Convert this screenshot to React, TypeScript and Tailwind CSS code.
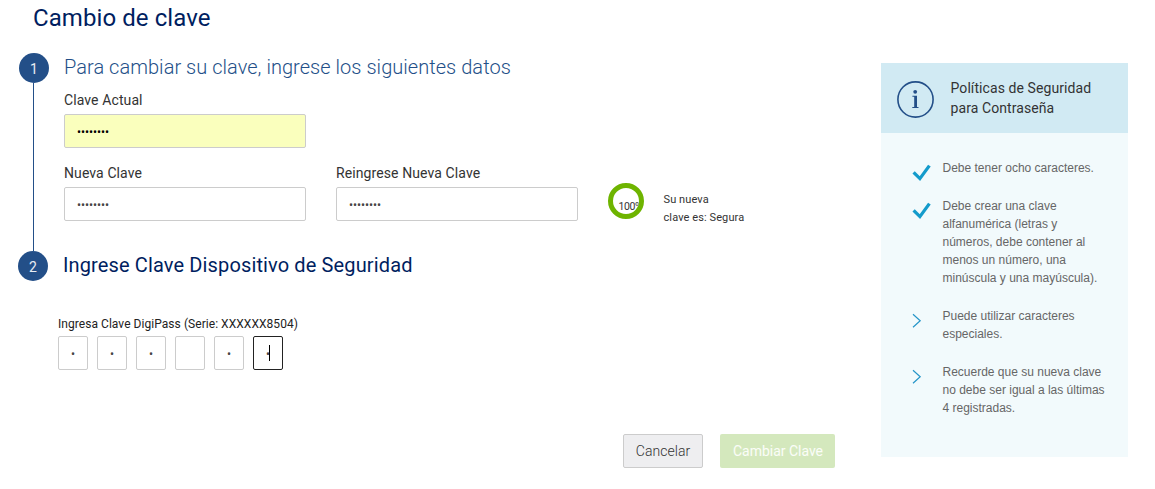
import React from "react";

const label = "h-5 text-[14px] leading-5 tracking-[0.1px] whitespace-nowrap text-[#333]";
const field =
  "block h-[34px] w-[242px] rounded-[2px] border border-[#ccc] px-3 pt-0.5 text-[12px] tracking-[-0.04px] text-[#444] outline-none";

function Step({ n }: { n: number }) {
  return (
    <div className="flex size-[30px] shrink-0 items-center justify-center rounded-full bg-[#234f88] pt-[2px] text-[14px] leading-none text-white/90">
      {n}
    </div>
  );
}

function Check() {
  return (
    <svg className="mt-[4px] ml-[31px] block" width="20" height="20" viewBox="0 0 20 20" fill="none">
      <path d="M1.6 9.4 7.9 15.6 17.4 2.6" stroke="#149bcb" strokeWidth="3.3" />
    </svg>
  );
}

function Chevron() {
  return (
    <svg className="mt-[6px] ml-[31px] block" width="10" height="16" viewBox="0 0 10 16" fill="none">
      <path d="M1 1.2 8.2 7.7 1 14.2" stroke="#2595c8" strokeWidth="1.2" />
    </svg>
  );
}

const policies = [
  { done: true, lines: ["Debe tener ocho caracteres."] },
  {
    done: true,
    lines: [
      "Debe crear una clave",
      "alfanumérica (letras y",
      "números, debe contener al",
      "menos un número, una",
      "minúscula y una mayúscula).",
    ],
  },
  { done: false, lines: ["Puede utilizar caracteres", "especiales."] },
  { done: false, lines: ["Recuerde que su nueva clave", "no debe ser igual a las últimas", "4 registradas."] },
];

const digits = ["•", "•", "•", "", "•"];

export default function App() {
  return (
    <div className="flex h-[489px] w-[1155px] overflow-hidden bg-white font-['Roboto',sans-serif]">
      <main className="w-[881px] shrink-0">
        <h1 className="mt-[5px] ml-[33px] h-[27px] text-[24px] leading-[26px] tracking-[0.08px] text-[#001e60]">
          Cambio de clave
        </h1>

        <section className="mt-[21px] flex h-[198px]">
          <div className="ml-[19px] flex w-[45px] shrink-0 flex-col">
            <Step n={1} />
            <div className="ml-[14px] w-px flex-1 bg-[#234f88]" />
          </div>
          <div>
            <h2 className="h-7 text-[20px] leading-7 font-light tracking-[0.04px] whitespace-nowrap text-[#234f88]">
              Para cambiar su clave, ingrese los siguientes datos
            </h2>
            <div className="mt-[9px]">
              <div className={label}>Clave Actual</div>
              <input type="password" defaultValue="12345678" className={`${field} mt-1 bg-[#faffbd] text-black`} />
            </div>
            <div className="mt-[15px] flex">
              <div className="w-[272px]">
                <div className={label}>Nueva Clave</div>
                <input type="password" defaultValue="12345678" className={`${field} mt-1`} />
              </div>
              <div className="w-[272px]">
                <div className={label}>Reingrese Nueva Clave</div>
                <input type="password" defaultValue="12345678" className={`${field} mt-1`} />
              </div>
              <div className="mt-5 size-9 shrink-0 overflow-hidden rounded-full border-[5px] border-[#6eb400]">
                <div className="mt-[12px] ml-[5.5px] text-[10.5px] leading-[13px] tracking-[-0.4px] text-[#333]">
                  100%
                </div>
              </div>
              <p className="mt-[28px] ml-[19.5px] text-[11px] leading-[18px] tracking-[0.1px] whitespace-nowrap text-[#333]">
                Su nueva
                <br />
                clave es: Segura
              </p>
            </div>
          </div>
        </section>

        <section className="flex h-[30px] pl-[18px]">
          <Step n={2} />
          <h2 className="ml-[15px] text-[20px] leading-[28px] tracking-[0.13px] text-[#001e60]">
            Ingrese Clave Dispositivo de Seguridad
          </h2>
        </section>

        <section className="mt-[34px] ml-[58px]">
          <div className="h-[21px] text-[12px] leading-[18px] tracking-[0.05px] text-[#222]">
            Ingresa Clave DigiPass (Serie: XXXXXX8504)
          </div>
          <div className="flex gap-[9px]">
            {digits.map((d, i) => (
              <div
                key={i}
                className="flex h-[34px] w-[30px] items-center justify-center rounded-[2px] border border-[#ccc] pt-0.5 text-[12px] text-[#444]"
              >
                {d}
              </div>
            ))}
            <div className="flex h-[34px] w-[30px] items-center justify-center rounded-[2px] border border-[#222] pt-0.5 text-[12px] text-[#444]">
              •<span className="-mt-0.5 -ml-px h-4 w-px bg-black" />
            </div>
          </div>
        </section>

        <div className="mt-16 ml-[623px] flex gap-[17px] text-[14px] font-light tracking-[0.05px]">
          <button className="h-[34px] w-20 rounded-[2px] border border-[#ccc] bg-[#eeeef0] text-[#333]">Cancelar</button>
          <button className="h-[34px] w-[115px] rounded-[2px] bg-[#d4e8bd] pl-px font-normal tracking-[-0.02px] whitespace-nowrap text-white/90">
            Cambiar Clave
          </button>
        </div>
      </main>

      <aside className="mt-[63px] h-[394px] w-[247px] shrink-0 bg-[#f2fafc]">
        <header className="flex h-[70px] items-center bg-[#d1eaf3]">
          <svg className="mt-1 ml-4 shrink-0" width="38" height="38" viewBox="0 0 38 38">
            <circle cx="18.5" cy="18.5" r="17.6" fill="none" stroke="#234f88" strokeWidth="1.6" />
            <circle cx="18.2" cy="10.8" r="1.9" fill="#234f88" />
            <path d="M15.4 14.8h4.6v11.2h1.5v1h-6.2v-1h1.9v-10.2h-1.8z" fill="#234f88" />
          </svg>
          <div className="ml-[15.5px] text-[14px] leading-5 tracking-[0.08px] whitespace-nowrap text-[#333]">
            Políticas de Seguridad
            <br />
            para Contraseña
          </div>
        </header>
        <ul className="flex flex-col gap-5 pt-[26px] font-['Liberation_Sans',Arial,sans-serif] text-[12px] leading-[18px] text-[#666]">
          {policies.map((p) => (
            <li key={p.lines[0]} className="flex items-start">
              <div className="h-[18px] w-[61.5px] shrink-0">{p.done ? <Check /> : <Chevron />}</div>
              <div className="whitespace-nowrap">
                {p.lines.map((l) => (
                  <div key={l}>{l}</div>
                ))}
              </div>
            </li>
          ))}
        </ul>
      </aside>
    </div>
  );
}
